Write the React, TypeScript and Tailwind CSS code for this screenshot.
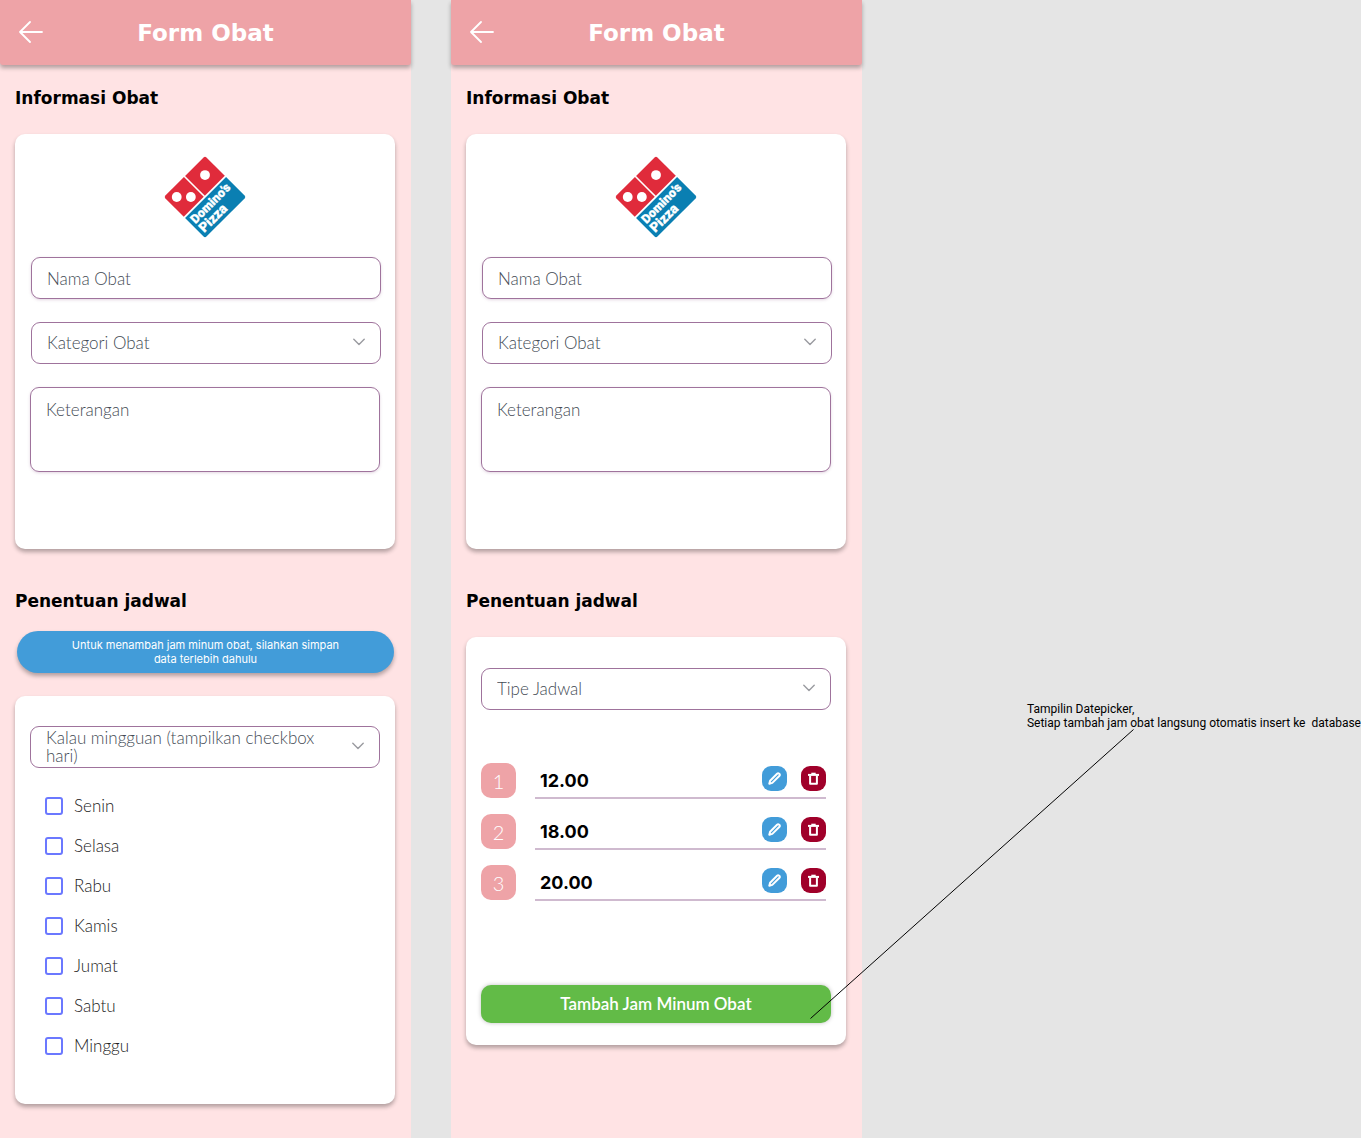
import type { ReactNode } from "react";

const DAYS = ["Senin", "Selasa", "Rabu", "Kamis", "Jumat", "Sabtu", "Minggu"];
const TIMES = ["12.00", "18.00", "20.00"];

function ArrowLeft() {
  return (
    <svg viewBox="0 0 24 22" className="h-[22px] w-6" fill="none" stroke="currentColor" strokeWidth="1.8" strokeLinecap="round" strokeLinejoin="round">
      <path d="M11 1 1 11l10 10M1 11h22" />
    </svg>
  );
}

function Chevron() {
  return (
    <svg viewBox="0 0 12 8" className="pointer-events-none absolute right-4 top-4 h-2 w-3" fill="none" stroke="#9a9ba0" strokeWidth="1.4" strokeLinecap="round" strokeLinejoin="round">
      <path d="M.8 1.2 6 6.4l5.200-5.200" />
    </svg>
  );
}

function Pencil() {
  return (
    <svg viewBox="0 0 13 13" className="size-[13px]" fill="none" stroke="currentColor" strokeWidth="2" strokeLinejoin="round" strokeLinecap="round">
      <path d="M1.300 11.700 2.100 8.700 9.300 1.500a1.100 1.100 0 0 1 1.600 0l.6.6a1.100 1.100 0 0 1 0 1.600L4.300 10.900Z" />
    </svg>
  );
}

function Trash() {
  return (
    <svg viewBox="0 0 13 13" className="size-[13px]" fill="none" stroke="currentColor" strokeLinejoin="round">
      <path d="M1 2.900h11" strokeWidth="2" />
      <path d="M4.300 1.500h4.400" strokeWidth="1.600" />
      <path d="M3.100 3.500v8.200h6.800V3.500" strokeWidth="2" />
    </svg>
  );
}

function Logo() {
  return (
    <svg viewBox="-40 -40 80 80" className="mx-auto size-20 overflow-visible" role="img" aria-label="Domino's Pizza">
      <g transform="rotate(-45)">
        <path d="M-27-29H-.8V-1H-29V-27a2 2 0 0 1 2-2Z" fill="#e02b3b" />
        <path d="M.8-29H27a2 2 0 0 1 2 2V-1H.8Z" fill="#e02b3b" />
        <path d="M-29 .8H29V27a2 2 0 0 1-2 2H-27a2 2 0 0 1-2-2Z" fill="#0a7fb2" />
        <circle cx="15.500" cy="-15.500" r="4.900" fill="#fff" />
        <circle cx="-20" cy="-20" r="4.900" fill="#fff" />
        <circle cx="-10" cy="-10" r="4.900" fill="#fff" />
        <g fill="#fff" stroke="#fff" strokeWidth="0.3" className="font-['Roboto',sans-serif] font-black">
          <text x="-26" y="12.500" fontSize="12.500">Domino’s</text>
          <text x="-26" y="25" fontSize="13.500">Pizza</text>
        </g>
      </g>
    </svg>
  );
}

function SelectBox({ label, wrap = false }: { label: string; wrap?: boolean }) {
  return (
    <div className="relative">
      <select
        aria-label={label}
        className={
          wrap
            ? "block h-[42px] w-full appearance-none whitespace-normal rounded-[9px] border border-[#9f739c] bg-white pl-[15px] pr-[50px] text-[17px] font-light leading-[18px] text-[#444b55]"
            : "block h-[42px] w-full appearance-none rounded-[9px] border border-[#9f739c] bg-white pl-[15px] pr-[50px] text-[17px] font-light text-[#444b55]"
        }
      >
        <option>{label}</option>
      </select>
      <Chevron />
    </div>
  );
}

function Card({ className, children }: { className: string; children: ReactNode }) {
  return (
    <div className={`rounded-[10px] bg-white px-[15px] shadow-[0_3px_4px_rgba(0,0,0,0.3)] ${className}`}>{children}</div>
  );
}

function Phone({ children }: { children: ReactNode }) {
  return (
    <main className="min-w-0 bg-[#ffe3e4] pb-[34px]">
      <header className="relative flex h-[65px] items-center justify-center rounded-b-[3px] bg-[#eea3a7] text-white shadow-[0_3px_4px_rgba(0,0,0,0.3)]">
        <button type="button" aria-label="Kembali" className="absolute left-[19px] top-[21px]">
          <ArrowLeft />
        </button>
        <h1 className="font-['DejaVu_Sans',sans-serif] text-[23px] font-bold leading-8">Form Obat</h1>
      </header>
      <div className="pl-[15px] pr-4">
        <h2 className="pt-[21px] font-['DejaVu_Sans',sans-serif] text-[17px] font-bold leading-6">Informasi Obat</h2>
        <Card className="mt-6 h-[415px] pt-[23px]">
          <Logo />
          <div className="-mr-px mt-5 pl-px">
            <input
              aria-label="Nama Obat"
              placeholder="Nama Obat"
              className="block h-[42px] w-full rounded-[9px] border border-[#9f739c] px-[15px] text-[17px] font-light shadow-[0_1px_3px_rgba(159,115,156,0.3)] placeholder:text-[#444b55]"
            />
            <div className="mt-[23px]">
              <SelectBox label="Kategori Obat" />
            </div>
          </div>
          <textarea
            aria-label="Keterangan"
            placeholder="Keterangan"
            className="mt-[23px] block h-[85px] w-full resize-none rounded-[9px] border border-[#9f739c] px-[15px] pt-3 text-[17px] font-light leading-5 shadow-[0_1px_3px_rgba(159,115,156,0.3)] placeholder:text-[#444b55]"
          />
        </Card>
        <h2 className="mt-10 font-['DejaVu_Sans',sans-serif] text-[17px] font-bold leading-6">Penentuan jadwal</h2>
        {children}
      </div>
    </main>
  );
}

export default function App() {
  return (
    <div className="grid min-h-screen grid-cols-[411fr_40fr_411fr_499fr] overflow-hidden bg-[#e5e5e5] font-['Lato',sans-serif] text-black">
      <Phone>
        <p className="ml-0.5 mr-px mt-[18px] flex h-[42px] flex-col items-center justify-center rounded-full bg-[#429cd9] px-12 text-center font-['Inter',sans-serif] text-[11px] leading-[14px] text-white shadow-[0_3px_4px_rgba(0,0,0,0.3)]">
          <span>Untuk menambah jam minum obat, silahkan simpan</span>
          <span>data terlebih dahulu</span>
        </p>
        <Card className="mt-[23px] h-[408px] pt-[30px]">
          <SelectBox wrap label="Kalau mingguan (tampilkan checkbox hari)" />
          <ul className="mt-[18px] pl-[15px]">
            {DAYS.map((day) => (
              <li key={day}>
                <label className="flex h-10 items-center gap-[11px] text-[17px] font-light text-[#222]">
                  <input type="checkbox" className="size-[18px] appearance-none rounded-[3px] border-2 border-[#6b78ff] checked:bg-[#6b78ff]" />
                  {day}
                </label>
              </li>
            ))}
          </ul>
        </Card>
      </Phone>
      <div />
      <Phone>
        <Card className="mt-6 h-[408px] pt-[31px]">
          <SelectBox label="Tipe Jadwal" />
          <ol className="mt-[53px] flex flex-col gap-[15px]">
            {TIMES.map((time, i) => (
              <li key={time} className="flex h-9 pr-[5px]">
                <span className="flex size-[35px] items-center justify-center rounded-[10px] bg-[#eea3a7] text-[20px] font-light text-white">
                  {i + 1}
                </span>
                <div className="ml-[19px] flex flex-1 items-start border-b-2 border-[#cfbacf] pl-[5px] pt-[3px]">
                  <span className="flex-1 pt-[3px] font-['Inter',sans-serif] text-[18px] font-bold leading-6">{time}</span>
                  <button type="button" aria-label={`Ubah ${time}`} className="flex size-[25px] items-center justify-center rounded-[9px] bg-[#429cd9] text-white">
                    <Pencil />
                  </button>
                  <button type="button" aria-label={`Hapus ${time}`} className="ml-3.5 flex size-[25px] items-center justify-center rounded-[9px] bg-[#a0002a] text-white">
                    <Trash />
                  </button>
                </div>
              </li>
            ))}
          </ol>
          <button type="button" className="mt-[84px] h-[38px] w-full rounded-[10px] bg-[#62bb47] text-[17px] font-semibold text-white shadow-[0_0_4px_rgba(0,0,0,0.25)]">
            Tambah Jam Minum Obat
          </button>
        </Card>
      </Phone>
      <aside className="pl-[165px] pt-[702px]">
        <div className="relative whitespace-pre font-['Roboto',sans-serif] text-[12px] leading-[14px]">
          <p>Tampilin Datepicker,</p>
          <p>Setiap tambah jam obat langsung otomatis insert ke  database</p>
          <svg viewBox="0 0 324 290" className="pointer-events-none absolute -left-[217px] top-[27px] h-[290px] w-[324px]" stroke="#000" strokeWidth="1" aria-hidden="true">
            <path d="M323.500.5.5 289.500" />
          </svg>
        </div>
      </aside>
    </div>
  );
}
